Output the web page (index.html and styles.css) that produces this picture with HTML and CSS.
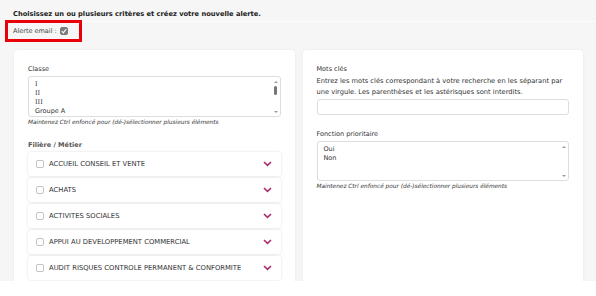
FILE: index.html
```html
<!DOCTYPE html>
<html lang="fr">
<head>
  <meta charset="UTF-8" />
  <title>Nouvelle alerte</title>
  <link rel="stylesheet" href="styles.css">
</head>
<body>
  <div class="page">
    <div class="intro">
      <p class="introTitle">Choisissez un ou plusieurs critères et créez votre nouvelle alerte.</p>
    </div>

    <div class="emailAlert">
      <span>Alerte email :</span>
      <span class="checkBox checked">
        <svg width="8" height="8" viewBox="0 0 8 8"><path d="M1.8 4.2l1.5 1.6L6.3 2" stroke="#fff" stroke-width="1.2" fill="none"/></svg>
      </span>
    </div>

    <div class="columns">
      <div class="card">
        <div class="field">
          <div class="label">Classe</div>
          <div class="listBox">
            <div class="options">
              <div class="option serif">I</div>
              <div class="option serif">II</div>
              <div class="option serif">III</div>
              <div class="option">Groupe A</div>
            </div>
            <div class="scrollBar">
              <span class="arrow up"></span>
              <span class="thumb"></span>
              <span class="arrow down"></span>
            </div>
          </div>
          <div class="hint">Maintenez Ctrl enfoncé pour (dé-)sélectionner plusieurs éléments</div>
        </div>

        <div class="field">
          <div class="label strong">Filière / Métier</div>
          <div class="accordion">
            <div class="accItem"><span class="checkBox"></span><span class="accText">ACCUEIL CONSEIL ET VENTE</span><svg class="chevron" width="9" height="6" viewBox="0 0 9 6"><path d="M1 1l3.5 3.4L8 1" stroke="#b02a6b" stroke-width="1.6" fill="none"/></svg></div>
            <div class="accItem"><span class="checkBox"></span><span class="accText">ACHATS</span><svg class="chevron" width="9" height="6" viewBox="0 0 9 6"><path d="M1 1l3.5 3.4L8 1" stroke="#b02a6b" stroke-width="1.6" fill="none"/></svg></div>
            <div class="accItem"><span class="checkBox"></span><span class="accText">ACTIVITES SOCIALES</span><svg class="chevron" width="9" height="6" viewBox="0 0 9 6"><path d="M1 1l3.5 3.4L8 1" stroke="#b02a6b" stroke-width="1.6" fill="none"/></svg></div>
            <div class="accItem"><span class="checkBox"></span><span class="accText">APPUI AU DEVELOPPEMENT COMMERCIAL</span><svg class="chevron" width="9" height="6" viewBox="0 0 9 6"><path d="M1 1l3.5 3.4L8 1" stroke="#b02a6b" stroke-width="1.6" fill="none"/></svg></div>
            <div class="accItem"><span class="checkBox"></span><span class="accText">AUDIT RISQUES CONTROLE PERMANENT &amp; CONFORMITE</span><svg class="chevron" width="9" height="6" viewBox="0 0 9 6"><path d="M1 1l3.5 3.4L8 1" stroke="#b02a6b" stroke-width="1.6" fill="none"/></svg></div>
          </div>
        </div>
      </div>

      <div class="card">
        <div class="field tight">
          <div class="label">Mots clés</div>
          <div class="desc">Entrez les mots clés correspondant à votre recherche en les séparant par une virgule. Les parenthèses et les astérisques sont interdits.</div>
          <div class="textInput"></div>
        </div>

        <div class="field">
          <div class="label">Fonction prioritaire</div>
          <div class="listBox short">
            <div class="options">
              <div class="option">Oui</div>
              <div class="option">Non</div>
            </div>
            <div class="scrollBar">
              <span class="arrow up"></span>
              <span class="arrow down"></span>
            </div>
          </div>
          <div class="hint">Maintenez Ctrl enfoncé pour (dé-)sélectionner plusieurs éléments</div>
        </div>
      </div>
    </div>
  </div>
</body>
</html>
```

FILE: styles.css
```css
body {
  margin: 0;
  background: #fff;
  font-family: "DejaVu Sans", Verdana, sans-serif;
  color: #333;
}

.page {
  height: 281px;
  overflow: hidden;
  background: #f6f6f6;
}

.intro {
  height: 22px;
  border-bottom: 1px solid #fdfdfd;
  box-sizing: border-box;
  padding: 10px 13px 0;
}

.introTitle {
  margin: 0;
  font-size: 6.7px;
  font-weight: bold;
  color: #222;
}

.emailAlert {
  display: flex;
  align-items: center;
  gap: 3px;
  width: 71px;
  height: 16px;
  margin: 1px 0 0 8px;
  padding-left: 5px;
  box-sizing: border-box;
  outline: 3px solid #e8000b;
  font-size: 6.5px;
  color: #444;
}

.checkBox {
  display: inline-flex;
  width: 8px;
  height: 8px;
  box-sizing: border-box;
  border: 1px solid #c4c4c4;
  border-radius: 2px;
  background: #fff;
  flex-shrink: 0;
}

.checkBox.checked {
  background: #7a7a7a;
  border-color: #7a7a7a;
}

.checkBox svg {
  margin: -1px;
}

.columns {
  display: grid;
  grid-template-columns: 1fr 1fr;
  gap: 8px;
  padding: 0 13px 0 14px;
  margin-top: 11px;
}

.card {
  background: #fff;
  border-radius: 4px;
  box-shadow: 0 0 3px rgba(0, 0, 0, 0.06);
  padding: 14px 14px 20px;
  min-height: 260px;
}

.field {
  margin-bottom: 15px;
}

.field.tight {
  margin-bottom: 14px;
}

.label {
  font-size: 6.5px;
  line-height: 10px;
  margin-bottom: 2px;
}

.label.strong {
  font-weight: bold;
  color: #555;
}

.listBox {
  display: flex;
  height: 41px;
  box-sizing: border-box;
  border: 1px solid #ddd;
  border-radius: 3px;
  overflow: hidden;
}

.listBox.short {
  height: 40px;
}

.options {
  flex: 1;
  padding: 3px 6px 0;
  font-size: 6.5px;
  line-height: 9px;
}

.option.serif {
  font-family: "DejaVu Serif", serif;
}

.scrollBar {
  width: 8px;
  display: flex;
  flex-direction: column;
  align-items: center;
  padding: 4px 0 3px;
}

.arrow {
  width: 0;
  height: 0;
  border-left: 2px solid transparent;
  border-right: 2px solid transparent;
}

.arrow.up {
  border-bottom: 2px solid #999;
}

.arrow.down {
  border-top: 2px solid #999;
  margin-top: auto;
}

.thumb {
  width: 3px;
  height: 9px;
  margin-top: 3px;
  background: #777;
  border-radius: 2px;
}

.hint {
  font-size: 5.8px;
  font-style: italic;
  margin-top: 2px;
  color: #333;
}

.accordion {
  display: flex;
  flex-direction: column;
  gap: 2px;
}

.accItem {
  display: flex;
  align-items: center;
  height: 24px;
  padding: 0 9px 0 8px;
  border-radius: 3px;
  background: #fff;
  box-shadow: 0 0 3px rgba(0, 0, 0, 0.12);
}

.accText {
  flex: 1;
  margin-left: 5px;
  font-size: 6.8px;
  color: #333;
}

.chevron {
  flex-shrink: 0;
}

.desc {
  font-size: 6.7px;
  line-height: 10.5px;
  margin-bottom: 2px;
}

.textInput {
  height: 16px;
  box-sizing: border-box;
  border: 1px solid #ddd;
  border-radius: 3px;
}
```
